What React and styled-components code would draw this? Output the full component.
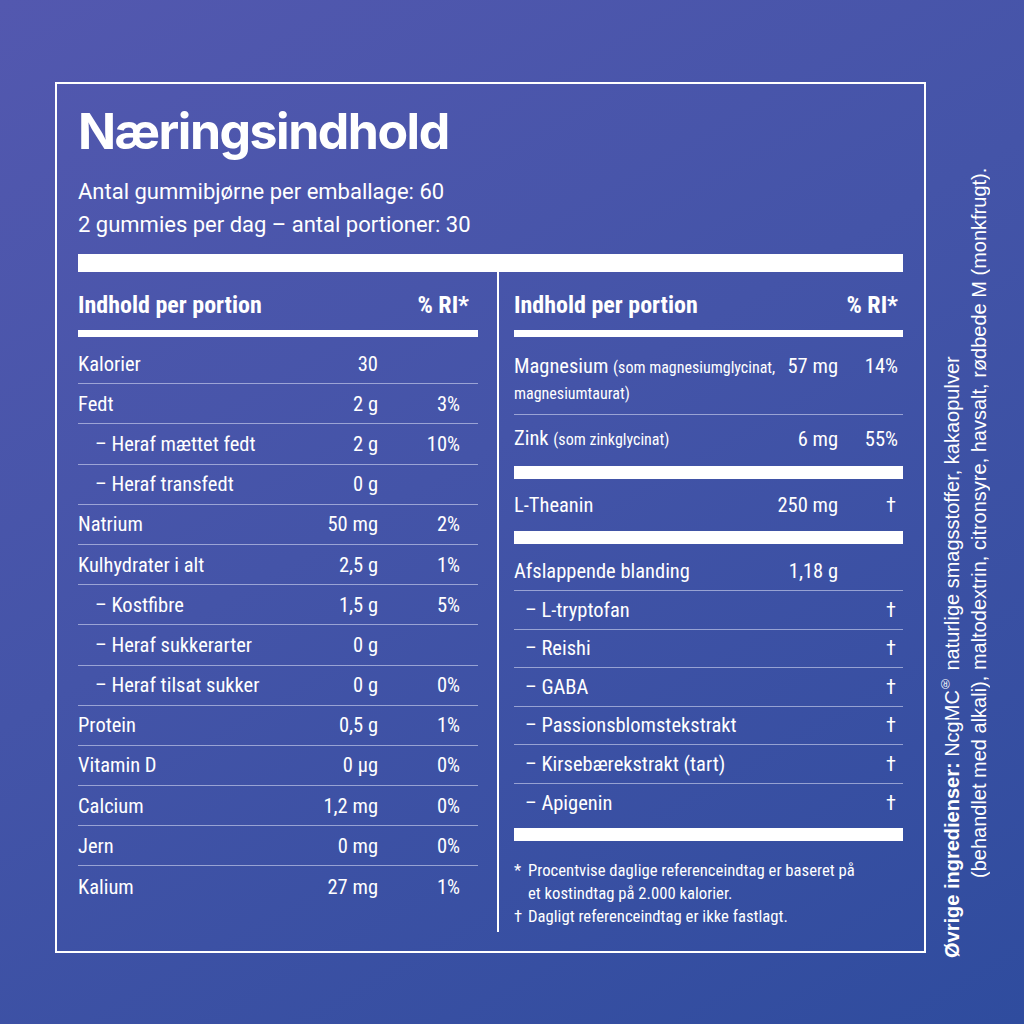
import React from 'react'
import styled, { createGlobalStyle } from 'styled-components'

const GlobalStyle = createGlobalStyle`
  html, body { margin: 0; padding: 0; }
  body {
    font-family: Roboto, "Liberation Sans", sans-serif;
    color: #fff;
    background: #3f52a6;
  }
`;

const narrow = `"Roboto Condensed", "Liberation Sans Narrow", "Arial Narrow", Roboto, sans-serif`;

const Page = styled.div`
  width: 1024px;
  height: 1024px;
  box-sizing: border-box;
  padding: 82px 0 0 55px;
  display: flex;
  align-items: flex-start;
  overflow: hidden;
  background: linear-gradient(150deg, #5358af 0%, #4454a8 45%, #2f4c9e 100%);
`;

const Frame = styled.div`
  width: 871px;
  height: 871px;
  box-sizing: border-box;
  border: 2px solid #fff;
  padding: 18px 21px 19px;
  display: flex;
  flex-direction: column;
`;

const Title = styled.h1`
  margin: 0;
  font-family: Inter, Roboto, sans-serif;
  font-weight: 700;
  font-size: 50px;
  line-height: 58px;
  letter-spacing: -1.5px;
`;

const Intro = styled.div`
  margin-top: 15px;
  font-size: 22px;
  line-height: 33px;
`;

const ThickBar = styled.div`
  margin-top: 13px;
  height: 18px;
  background: #fff;
`;

const Columns = styled.div`
  flex: 1;
  display: grid;
  grid-template-columns: 419px 406px;
`;

const Column = styled.div`
  font-family: ${narrow};
  ${p => p.$right
    ? `border-left: 2px solid #fff; padding-left: 15px;`
    : `padding-right: 19px;`}
`;

const Head = styled.div`
  display: flex;
  justify-content: space-between;
  height: 58px;
  box-sizing: border-box;
  padding: 21px ${p => p.$pr}px 0 0;
  font-weight: 700;
  font-size: 24px;
  line-height: 24px;
`;

const Bar = styled.div`
  height: ${p => p.$h}px;
  background: #fff;
  margin-bottom: 7px;
  margin-top: ${p => p.$mt || 0}px;
`;

const Row = styled.div`
  display: flex;
  align-items: ${p => (p.$top ? 'flex-start' : 'center')};
  height: ${p => p.$h}px;
  box-sizing: border-box;
  padding-top: ${p => (p.$top ? 10 : 0)}px;
  font-size: 20.5px;
  line-height: 24px;
  border-bottom: ${p => (p.$last ? 'none' : '1.5px solid rgba(225, 230, 250, 0.55)')};
`;

const Name = styled.div`
  flex: 1;
  min-width: 0;
  padding-left: ${p => (p.$sub ? p.$indent : 0)}px;
  white-space: nowrap;
`;

const Note = styled.span`
  font-size: 16px;
`;

const Amount = styled.div`
  width: ${p => p.$w}px;
  text-align: right;
  white-space: nowrap;
`;

const Pct = styled.div`
  width: ${p => p.$w}px;
  text-align: right;
  padding-right: ${p => p.$pr}px;
  box-sizing: border-box;
`;

const Footnotes = styled.div`
  margin-top: 18px;
  font-size: 16.7px;
  line-height: 23px;
`;

const Foot = styled.div`
  display: grid;
  grid-template-columns: 14px 1fr;
`;

const Side = styled.div`
  margin: 76px 0 0 13px;
  height: 800px;
  writing-mode: vertical-rl;
  transform: rotate(180deg);
  font-family: "Liberation Sans", Arial, sans-serif;
  font-size: 20px;
  line-height: 27px;
  white-space: nowrap;
`;

const SideLine = styled.div`
  padding-inline-start: ${p => p.$indent || 0}px;
`;

const Reg = styled.span`
  font-size: 0.6em;
  vertical-align: 0.55em;
  line-height: 0;
`;

const left = [
  ['Kalorier', '30', ''],
  ['Fedt', '2 g', '3%'],
  ['– Heraf mættet fedt', '2 g', '10%', true],
  ['– Heraf transfedt', '0 g', '', true],
  ['Natrium', '50 mg', '2%'],
  ['Kulhydrater i alt', '2,5 g', '1%'],
  ['– Kostfibre', '1,5 g', '5%', true],
  ['– Heraf sukkerarter', '0 g', '', true],
  ['– Heraf tilsat sukker', '0 g', '0%', true],
  ['Protein', '0,5 g', '1%'],
  ['Vitamin D', '0 µg', '0%'],
  ['Calcium', '1,2 mg', '0%'],
  ['Jern', '0 mg', '0%'],
  ['Kalium', '27 mg', '1%'],
];

const blend = [
  'L-tryptofan',
  'Reishi',
  'GABA',
  'Passionsblomstekstrakt',
  'Kirsebærekstrakt (tart)',
  'Apigenin',
];

const LeftTable = () => (
  <Column>
    <Head $pr={9}>
      <span>Indhold per portion</span>
      <span>% RI*</span>
    </Head>
    <Bar $h={7} />
    {left.map(([name, amount, pct, sub], i) => (
      <Row key={name} $h={40.2} $last={i === left.length - 1}>
        <Name $sub={sub} $indent={17}>{name}</Name>
        <Amount $w={100}>{amount}</Amount>
        <Pct $w={100} $pr={18}>{pct}</Pct>
      </Row>
    ))}
  </Column>
);

const RightTable = () => (
  <Column $right>
    <Head $pr={5}>
      <span>Indhold per portion</span>
      <span>% RI*</span>
    </Head>
    <Bar $h={7} />
    <Row $h={71} $top>
      <Name>
        Magnesium <Note>(som magnesiumglycinat,</Note>
        <br />
        <Note>magnesiumtaurat)</Note>
      </Name>
      <Amount $w={120}>57 mg</Amount>
      <Pct $w={65} $pr={5}>14%</Pct>
    </Row>
    <Row $h={47} $last>
      <Name>
        Zink <Note>(som zinkglycinat)</Note>
      </Name>
      <Amount $w={120}>6 mg</Amount>
      <Pct $w={65} $pr={5}>55%</Pct>
    </Row>
    <Bar $h={13} $mt={4} />
    <Row $h={38} $last>
      <Name>L-Theanin</Name>
      <Amount $w={120}>250 mg</Amount>
      <Pct $w={65} $pr={7}>†</Pct>
    </Row>
    <Bar $h={13} $mt={7} />
    <Row $h={40}>
      <Name>Afslappende blanding</Name>
      <Amount $w={120}>1,18 g</Amount>
      <Pct $w={65} $pr={7}></Pct>
    </Row>
    {blend.map((name, i) => (
      <Row key={name} $h={38.5} $last={i === blend.length - 1}>
        <Name $sub $indent={11}>– {name}</Name>
        <Pct $w={65} $pr={7}>†</Pct>
      </Row>
    ))}
    <Bar $h={13} $mt={6} />
    <Footnotes>
      <Foot>
        <span>*</span>
        <span>
          Procentvise daglige referenceindtag er baseret på
          <br />
          et kostindtag på 2.000 kalorier.
        </span>
      </Foot>
      <Foot>
        <span>†</span>
        <span>Dagligt referenceindtag er ikke fastlagt.</span>
      </Foot>
    </Footnotes>
  </Column>
);

export default function App() {
  return (
    <Page>
      <GlobalStyle />
      <Frame>
        <Title>Næringsindhold</Title>
        <Intro>
          Antal gummibjørne per emballage: 60
          <br />
          2 gummies per dag – antal portioner: 30
        </Intro>
        <ThickBar />
        <Columns>
          <LeftTable />
          <RightTable />
        </Columns>
      </Frame>
      <Side>
        <SideLine>
          <b>Øvrige ingredienser:</b> NcgMC<Reg>®</Reg> naturlige smagsstoffer, kakaopulver
        </SideLine>
        <SideLine $indent={80}>
          (behandlet med alkali), maltodextrin, citronsyre, havsalt, rødbede M (monkfrugt).
        </SideLine>
      </Side>
    </Page>
  )
}
